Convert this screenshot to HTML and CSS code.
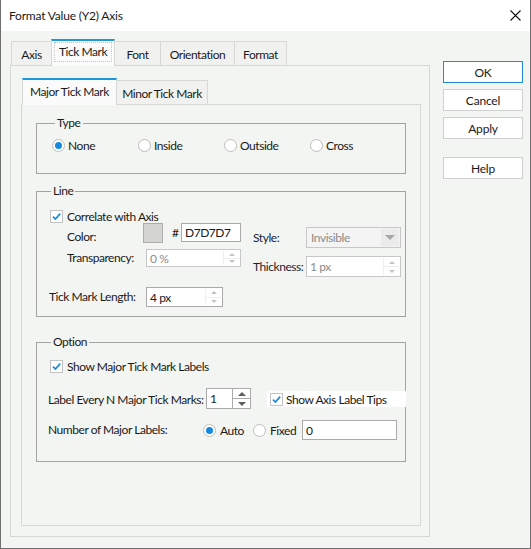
FILE: index.html
```html
<!DOCTYPE html>
<html lang="en">
<head>
    <meta charset="UTF-8">
    <title>Format Value (Y2) Axis</title>
    <link rel="stylesheet" href="styles.css">
</head>
<body>

<div class="window">
    <div class="titlebar">
        <span class="title">Format Value (Y2) Axis</span>
        <svg class="close" width="11" height="11" viewBox="0 0 11 11">
            <path d="M0.5 0.5 L10.5 10.5 M10.5 0.5 L0.5 10.5" stroke="#111" stroke-width="1.1" fill="none"/>
        </svg>
    </div>

    <div class="client">
        <div class="main">
            <div class="tabs outer">
                <div class="tab t-axis">Axis</div>
                <div class="tab t-tick active"><span class="focus">Tick Mark</span></div>
                <div class="tab t-font">Font</div>
                <div class="tab t-orient">Orientation</div>
                <div class="tab t-format">Format</div>
            </div>

            <div class="panel">
                <div class="tabs inner">
                    <div class="tab t-major active">Major Tick Mark</div>
                    <div class="tab t-minor">Minor Tick Mark</div>
                </div>

                <div class="subpanel">
                    <!-- Type -->
                    <fieldset class="group type">
                        <legend>Type</legend>
                        <div class="radio-row">
                            <label class="radio-item"><span class="radio checked"></span>None</label>
                            <label class="radio-item"><span class="radio"></span>Inside</label>
                            <label class="radio-item"><span class="radio"></span>Outside</label>
                            <label class="radio-item"><span class="radio"></span>Cross</label>
                        </div>
                    </fieldset>

                    <!-- Line -->
                    <fieldset class="group line">
                        <legend>Line</legend>
                        <div class="check-row">
                            <span class="check"><svg width="11" height="11" viewBox="0 0 11 11"><path d="M2 5.6 L4.4 8 L9.2 2.6" stroke="#1d8ad8" stroke-width="1.7" fill="none"/></svg></span>
                            <span>Correlate with Axis</span>
                        </div>
                        <div class="line-grid">
                            <div class="left-col">
                                <div class="row color-row">
                                    <span class="lbl lbl-color">Color:</span>
                                    <span class="swatch"></span>
                                    <span class="hash">#</span>
                                    <div class="field w60 h19"><span class="val">D7D7D7</span></div>
                                </div>
                                <div class="row trans-row">
                                    <span class="lbl lbl-trans">Transparency:</span>
                                    <div class="field w95 h18 disabled">
                                        <span class="val">0 %</span>
                                        <span class="spin light"><i class="up"></i><i class="down"></i></span>
                                    </div>
                                </div>
                                <div class="row length-row">
                                    <span class="lbl lbl-length">Tick Mark Length:</span>
                                    <div class="field w77 h20">
                                        <span class="val">4 px</span>
                                        <span class="spin light"><i class="up"></i><i class="down"></i></span>
                                    </div>
                                </div>
                            </div>
                            <div class="right-col">
                                <div class="row style-row">
                                    <span class="lbl lbl-right">Style:</span>
                                    <div class="select disabled">
                                        <span class="val">Invisible</span>
                                        <span class="arrow"><i class="caret"></i></span>
                                    </div>
                                </div>
                                <div class="row thick-row">
                                    <span class="lbl lbl-right">Thickness:</span>
                                    <div class="field w95 h21 disabled">
                                        <span class="val">1 px</span>
                                        <span class="spin light"><i class="up"></i><i class="down"></i></span>
                                    </div>
                                </div>
                            </div>
                        </div>
                    </fieldset>

                    <!-- Option -->
                    <fieldset class="group option">
                        <legend>Option</legend>
                        <div class="check-row">
                            <span class="check"><svg width="11" height="11" viewBox="0 0 11 11"><path d="M2 5.6 L4.4 8 L9.2 2.6" stroke="#1d8ad8" stroke-width="1.7" fill="none"/></svg></span>
                            <span>Show Major Tick Mark Labels</span>
                        </div>
                        <div class="row every-row">
                            <span class="lbl lbl-every">Label Every N Major Tick Marks:</span>
                            <div class="field w45 h21">
                                <span class="val">1</span>
                                <span class="spin boxed"><i class="up"></i><i class="down"></i></span>
                            </div>
                            <div class="tips">
                                <span class="check"><svg width="11" height="11" viewBox="0 0 11 11"><path d="M2 5.6 L4.4 8 L9.2 2.6" stroke="#1d8ad8" stroke-width="1.7" fill="none"/></svg></span>
                                <span>Show Axis Label Tips</span>
                            </div>
                        </div>
                        <div class="row count-row">
                            <span class="lbl lbl-count">Number of Major Labels:</span>
                            <label class="radio-item auto"><span class="radio checked"></span>Auto</label>
                            <label class="radio-item fixed"><span class="radio"></span>Fixed</label>
                            <div class="field w95 h20"><span class="val">0</span></div>
                        </div>
                    </fieldset>
                </div>
            </div>
        </div>

        <div class="buttons">
            <button class="btn default">OK</button>
            <button class="btn">Cancel</button>
            <button class="btn">Apply</button>
            <button class="btn help">Help</button>
        </div>
    </div>
</div>

</body>
</html>
```

FILE: styles.css
```css
body {
    margin: 0;
    font-family: Lato, "Noto Sans", sans-serif;
    font-size: 12px;
    letter-spacing: -0.45px;
    color: #1a1a1a;
    background-color: #f3f5f2;
}
.window {
    width: 531px;
    height: 549px;
    box-sizing: border-box;
    border: 1px solid #6f6f6f;
    border-top: none;
    display: flex;
    flex-direction: column;
}
.titlebar {
    height: 31px;
    background-color: #fff;
    display: flex;
    align-items: center;
    justify-content: space-between;
    padding-left: 8px;
    padding-right: 9px;
}
.title {
    line-height: 16px;
    margin-top: 1px;
    letter-spacing: -0.2px;
}
.close {
    display: block;
    margin-top: -1px;
}
.client {
    flex: 1;
    display: flex;
    background-color: #f3f5f2;
    padding-top: 8px;
    padding-left: 9px;
}
.main {
    width: 420px;
}

/* tabs */
.tabs {
    display: flex;
    align-items: flex-end;
    height: 26px;
    padding-left: 1px;
}
.tab {
    height: 24px;
    box-sizing: border-box;
    border: 1px solid #d6d8d4;
    border-bottom: none;
    margin-left: -1px;
    background-color: #f1f2ef;
    display: flex;
    align-items: center;
    justify-content: center;
    padding-top: 1px;
    white-space: nowrap;
}
.tab:first-child {
    margin-left: 0;
}
.tab.active {
    position: relative;
    z-index: 1;
    height: 27px;
    margin-bottom: -1px;
    border-top: 2px solid #1e98dc;
    background-color: #fafbfa;
    padding-top: 0;
    padding-bottom: 3px;
}
.t-axis { width: 41px; }
.t-tick { width: 64px; }
.t-font { width: 47px; }
.t-orient { width: 75px; }
.t-format { width: 53px; }
.t-major { width: 95px; }
.t-minor { width: 92px; }
.focus {
    border: 1px dotted #a9cfea;
    padding: 1px 4px 2px 4px;
}

.panel {
    height: 472px;
    box-sizing: border-box;
    border: 1px solid #d6d8d4;
    padding-top: 12px;
    padding-left: 10px;
}
.subpanel {
    width: 400px;
    height: 422px;
    box-sizing: border-box;
    border: 1px solid #d6d8d4;
    padding: 10px 14px 0 14px;
}

/* group boxes */
.group {
    margin: 0;
    border: 1px solid #a3a4a2;
    padding: 0;
    min-width: 0;
}
.group legend {
    line-height: 16px;
    padding: 0 2px 0 2px;
    margin-left: 3px;
}
.type {
    padding: 4px 0 18px 15px;
}
.line {
    margin-top: 9px;
    padding: 10px 0 9px 11px;
}
.option {
    margin-top: 17px;
    padding: 9px 0 21px 11px;
}

.radio-row {
    display: flex;
    height: 20px;
    align-items: center;
}
.radio-item {
    display: flex;
    align-items: center;
    white-space: nowrap;
}
.radio-row .radio-item {
    width: 86px;
}
.radio {
    width: 13px;
    height: 13px;
    box-sizing: border-box;
    border: 1px solid #bdbdbd;
    border-radius: 50%;
    background-color: #fff;
    margin-right: 3px;
    display: flex;
    align-items: center;
    justify-content: center;
    flex: none;
}
.radio.checked::after {
    content: "";
    width: 7px;
    height: 7px;
    border-radius: 50%;
    background-color: #1589de;
}

.check-row {
    display: flex;
    align-items: center;
    height: 14px;
    padding-left: 2px;
}
.check {
    width: 13px;
    height: 13px;
    box-sizing: border-box;
    border: 1px solid #c2c2c2;
    background-color: #fff;
    margin-right: 4px;
    display: flex;
    align-items: center;
    justify-content: center;
    flex: none;
}
.check svg {
    display: block;
}

.line-grid {
    display: flex;
}
.left-col {
    width: 205px;
}
.row {
    display: flex;
    align-items: center;
}
.lbl {
    line-height: 16px;
    white-space: nowrap;
    flex: none;
}
.color-row {
    height: 20px;
    align-items: flex-start;
}
.lbl-color {
    width: 95px;
    box-sizing: border-box;
    padding-left: 19px;
    margin-top: 6px;
}
.swatch {
    width: 20px;
    height: 20px;
    box-sizing: border-box;
    border: 1px solid #acacac;
    background-color: #d4d5d3;
}
.hash {
    width: 18px;
    box-sizing: border-box;
    padding-left: 9px;
    line-height: 20px;
}
.trans-row {
    margin-top: 6px;
    height: 18px;
}
.lbl-trans {
    width: 98px;
    box-sizing: border-box;
    padding-left: 19px;
}
.length-row {
    margin-top: 20px;
    height: 20px;
}
.lbl-length {
    width: 98px;
    padding-left: 1px;
    box-sizing: border-box;
}
.style-row {
    margin-top: 4px;
    height: 21px;
}
.thick-row {
    margin-top: 8px;
    height: 21px;
}
.lbl-right {
    width: 53px;
    color: #1c1f33;
}

/* inputs */
.field {
    box-sizing: border-box;
    border: 1px solid #a9aaa9;
    background-color: #fff;
    display: flex;
    align-items: stretch;
    flex: none;
}
.field .val {
    flex: 1;
    padding-left: 3px;
    display: flex;
    align-items: center;
}
.field.disabled {
    border-color: #c6c7c6;
}
.field.disabled .val,
.select.disabled .val {
    color: #8b8b8b;
}
.w45 { width: 45px; }
.w60 { width: 60px; }
.w77 { width: 77px; }
.w95 { width: 95px; }
.h18 { height: 18px; }
.h19 { height: 19px; }
.h20 { height: 20px; }
.h21 { height: 21px; }

.spin {
    width: 15px;
    display: flex;
    flex-direction: column;
}
.spin i {
    flex: 1;
    display: flex;
    align-items: center;
    justify-content: center;
}
.spin .up::after,
.spin .down::after {
    content: "";
    width: 0;
    height: 0;
    border-left: 3px solid transparent;
    border-right: 3px solid transparent;
}
.spin .up::after {
    border-bottom: 3px solid #c4c4c4;
}
.spin .down::after {
    border-top: 3px solid #c4c4c4;
}
.spin.light {
    margin: 1px 1px 1px 0;
    border-left: 1px solid #f0f0f0;
}
.spin.light .up {
    border-bottom: 1px solid #eeeeee;
}
.spin.boxed {
    width: 17px;
    border-left: 1px solid #a9aaa9;
}
.spin.boxed .up {
    border-bottom: 1px solid #a9aaa9;
}
.spin.boxed .up::after {
    border-bottom-color: #5f5f5f;
    border-left-width: 4px;
    border-right-width: 4px;
    border-bottom-width: 4px;
}
.spin.boxed .down::after {
    border-top-color: #5f5f5f;
    border-left-width: 4px;
    border-right-width: 4px;
    border-top-width: 4px;
}

.select {
    width: 95px;
    height: 21px;
    box-sizing: border-box;
    border: 1px solid #c6c7c6;
    background-color: #f4f4f4;
    display: flex;
}
.select .val {
    flex: 1;
    padding-left: 4px;
    display: flex;
    align-items: center;
}
.select .arrow {
    width: 18px;
    margin: 1px;
    background-color: #ebebeb;
    display: flex;
    align-items: center;
    justify-content: center;
}
.caret {
    display: block;
    width: 0;
    height: 0;
    border-left: 5px solid transparent;
    border-right: 5px solid transparent;
    border-top: 5px solid #a8a8a8;
}

.every-row {
    margin-top: 15px;
    height: 21px;
}
.lbl-every {
    width: 158px;
    padding-top: 2px;
}
.tips {
    margin-left: 16px;
    width: 139px;
    height: 16px;
    margin-top: 1px;
    background-color: #fff;
    display: flex;
    align-items: center;
    padding-left: 3px;
    box-sizing: border-box;
    white-space: nowrap;
    flex: none;
}
.tips .check {
    margin-right: 3px;
}
.count-row {
    margin-top: 11px;
    height: 20px;
}
.lbl-count {
    width: 155px;
}
.auto {
    width: 50px;
}
.fixed {
    width: 49px;
}
.count-row .radio {
    margin-right: 4px;
}

/* buttons */
.buttons {
    margin-left: 13px;
    margin-top: 22px;
    display: flex;
    flex-direction: column;
}
.btn {
    width: 80px;
    height: 22px;
    box-sizing: border-box;
    border: 1px solid #cfd0cf;
    background-color: #fff;
    font-family: inherit;
    font-size: 12px;
    letter-spacing: -0.2px;
    color: #1a1a1a;
    padding: 0;
    margin-bottom: 6px;
}
.btn.default {
    border-color: #1f8ad6;
}
.btn.help {
    margin-top: 12px;
}
```
